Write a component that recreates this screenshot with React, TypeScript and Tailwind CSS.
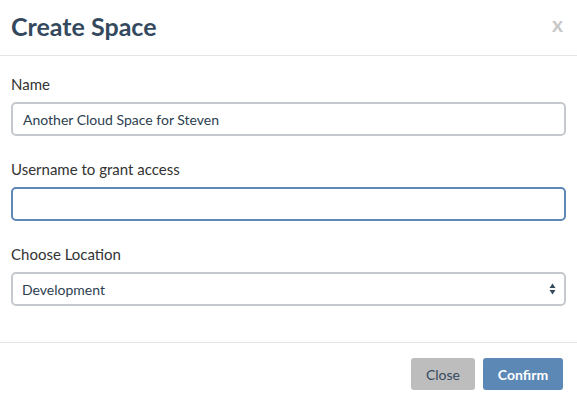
export default function App() {
  return (
    <div className="w-[577px] h-[400px] bg-white font-['Lato','Liberation_Sans',sans-serif] text-[#34495e]">
      <div className="h-[56px] pl-[11px] pr-[14px] flex items-center justify-between border-b border-[#e5e5e5]">
        <h1 className="text-[25px] font-bold text-[#34495e] leading-none -mt-[3px]">Create Space</h1>
        <span className="text-[21px] font-bold text-[#c8c8c8] leading-none -mt-[8px]">x</span>
      </div>
      <div className="px-[11px] pt-[18px] pb-[36px] flex flex-col">
        <label className="text-[15px] leading-[20px] text-[#333] mb-[8px]">Name</label>
        <div className="h-[34px] border-2 border-[#c5c9cd] rounded-[5px] flex items-center px-[10px] text-[14px] text-[#2c3e50]">
          Another Cloud Space for Steven
        </div>
        <label className="text-[15px] leading-[20px] text-[#333] mt-[23px] mb-[8px]">Username to grant access</label>
        <div className="h-[34px] border-2 border-[#5b88b5] rounded-[5px]" />
        <label className="text-[15px] leading-[20px] text-[#333] mt-[23px] mb-[8px]">Choose Location</label>
        <div className="h-[34px] border-2 border-[#c5c9cd] rounded-[5px] flex items-center justify-between pl-[9px] pr-[10px] text-[14px] text-[#2c3e50]">
          <span>Development</span>
          <svg width="7" height="12" viewBox="0 0 7 12" className="mr-[-2px]">
            <path d="M3.5 0.5 L6.5 5 L0.5 5 Z" fill="#34495e" />
            <path d="M3.5 11.5 L6.5 7 L0.5 7 Z" fill="#34495e" />
          </svg>
        </div>
      </div>
      <div className="border-t border-[#e5e5e5] px-[14px] pt-[15px] flex justify-end gap-[8px]">
        <button className="w-[64px] h-[32px] rounded-[3px] bg-[#bdbdbd] text-[#34495e] text-[14px]">Close</button>
        <button className="w-[80px] h-[32px] rounded-[3px] bg-[#5b88b5] text-white text-[14px] font-bold">Confirm</button>
      </div>
    </div>
  );
}
